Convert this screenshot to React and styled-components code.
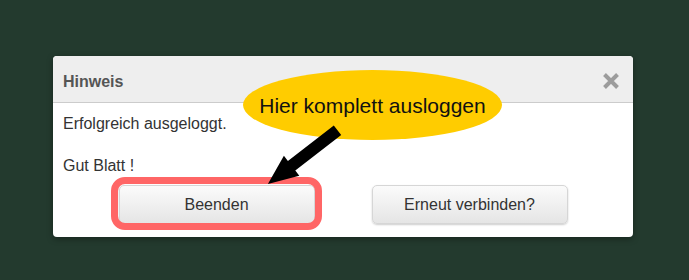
import React from "react";
import styled, { createGlobalStyle } from "styled-components";

const Global = createGlobalStyle`
  html, body { margin: 0; padding: 0; }
  body {
    background: #233a2e;
    font-family: "Liberation Sans", Arial, sans-serif;
  }
`;

const Page = styled.div`
  padding: 56px 0 0 53px;
  height: 280px;
  box-sizing: border-box;
`;

const Dialog = styled.div`
  position: relative;
  width: 580px;
  background: #ffffff;
  border-radius: 4px;
  box-shadow: 0 2px 6px rgba(0, 0, 0, 0.35);
`;

const Header = styled.div`
  display: flex;
  justify-content: space-between;
  align-items: flex-start;
  padding: 16px 13px 10px 10px;
  background: #eeeeee;
  border-bottom: 1px solid #cccccc;
  border-radius: 4px 4px 0 0;
`;

const Title = styled.div`
  font-size: 16px;
  line-height: 20px;
  font-weight: bold;
  color: #555555;
`;

const Close = styled.svg`
  display: block;
  width: 18px;
  height: 18px;
`;

const Body = styled.div`
  padding: 10px 10px 0;
  font-size: 16px;
  line-height: 21px;
  color: #333333;
`;

const Buttons = styled.div`
  display: flex;
  justify-content: center;
  gap: 57px;
  padding: 9px 0 13px;
`;

const Button = styled.button`
  width: 196px;
  height: 39px;
  border: 1px solid #d6d6d6;
  border-radius: 5px;
  background: linear-gradient(#fbfbfb, #e5e5e5);
  box-shadow: 0 1px 2px rgba(0, 0, 0, 0.2);
  font-family: "Liberation Sans", Arial, sans-serif;
  font-size: 16px;
  color: #333333;
  padding: 0;
`;

const Bubble = styled.div`
  position: absolute;
  left: 190px;
  top: 14px;
  width: 259px;
  height: 70px;
  border-radius: 50%;
  background: #ffcc00;
  display: flex;
  align-items: center;
  justify-content: center;
  font-size: 21px;
  color: #111111;
  padding-top: 2px;
  box-sizing: border-box;
`;

const Highlight = styled.div`
  position: absolute;
  left: 58px;
  top: 121px;
  width: 211px;
  height: 53px;
  box-sizing: border-box;
  border: 7px solid #ff6666;
  border-radius: 14px;
  pointer-events: none;
`;

const Arrow = styled.svg`
  position: absolute;
  left: 197px;
  top: 59px;
  width: 100px;
  height: 80px;
  overflow: visible;
`;

export default function App() {
  return (
    <>
      <Global />
      <Page>
        <Dialog>
          <Header>
            <Title>Hinweis</Title>
            <Close viewBox="0 0 18 18">
              <path d="M2.5 2.5 L15.5 15.5 M15.5 2.5 L2.5 15.5" stroke="#9c9c9c" strokeWidth="4" strokeLinecap="butt" />
            </Close>
          </Header>
          <Body>
            Erfolgreich ausgeloggt.
            <br />
            <br />
            Gut Blatt !
          </Body>
          <Buttons>
            <Button>Beenden</Button>
            <Button>Erneut verbinden?</Button>
          </Buttons>
          <Highlight />
          <Bubble>Hier komplett ausloggen</Bubble>
          <Arrow viewBox="0 0 100 80">
            <polygon
              points="91.2,20 45.3,55.4 49.3,60.7 17.9,69.1 33.9,40.7 37.9,45.9 83.8,10.6"
              fill="#000000"
            />
          </Arrow>
        </Dialog>
      </Page>
    </>
  );
}
